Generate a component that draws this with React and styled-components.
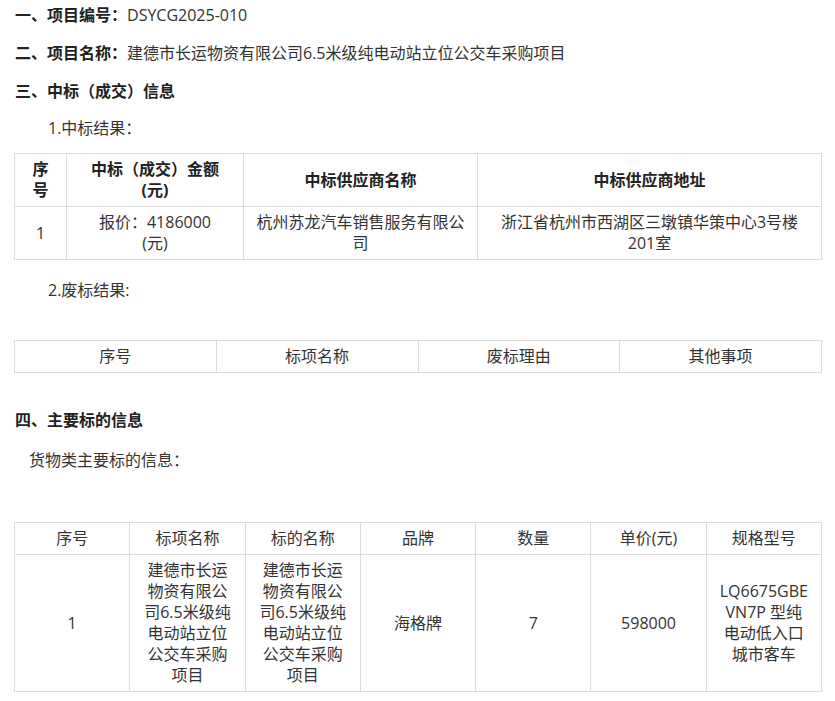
import React from 'react';
import styled, { createGlobalStyle } from 'styled-components';

const Global = createGlobalStyle`
body {
    margin: 0;
    background: #fff;
    color: #333;
    font-family: "Open Sans", "Noto Sans CJK SC", sans-serif;
    font-size: 16px;
}
`;

const Page = styled.div`
padding: 3px 13px 10px 14px;
`;

const Para = styled.p`
margin: ${p => p.$top || 0}px 0 0;
padding-left: ${p => p.$indent || 1}px;
line-height: 24px;
font-size: 16px;
b {
    font-weight: 700;
    color: #222;
}
`;

const Table = styled.table`
margin-top: ${p => p.$top || 0}px;
width: 100%;
border-collapse: collapse;
table-layout: fixed;
td, th {
    border: 1px solid #dcdcdc;
    padding: 5px 10px;
    text-align: center;
    vertical-align: middle;
    line-height: 21px;
    font-size: 16px;
    color: #333;
}
th {
    font-weight: ${p => (p.$boldHead ? 700 : 400)};
    color: ${p => (p.$boldHead ? '#222' : '#333')};
}
`;

const App = () => {
    return (
        <>
            <Global />
            <Page>
                <Para><b>一、项目编号：</b>DSYCG2025-010</Para>
                <Para $top={14}><b>二、项目名称：</b>建德市长运物资有限公司6.5米级纯电动站立位公交车采购项目</Para>
                <Para $top={14}><b>三、中标（成交）信息</b></Para>
                <Para $top={13} $indent={34}>1.中标结果：</Para>
                <Table $top={13} $boldHead>
                    <colgroup>
                        <col style={{ width: 52 }} />
                        <col style={{ width: 177 }} />
                        <col style={{ width: 234 }} />
                        <col />
                    </colgroup>
                    <thead>
                        <tr>
                            <th>序号</th>
                            <th>中标（成交）金额<br />(元)</th>
                            <th>中标供应商名称</th>
                            <th>中标供应商地址</th>
                        </tr>
                    </thead>
                    <tbody>
                        <tr>
                            <td>1</td>
                            <td>报价：4186000<br />(元)</td>
                            <td>杭州苏龙汽车销售服务有限公司</td>
                            <td>浙江省杭州市西湖区三墩镇华策中心3号楼201室</td>
                        </tr>
                    </tbody>
                </Table>
                <Para $top={18} $indent={34}>2.废标结果:</Para>
                <Table $top={38}>
                    <thead>
                        <tr>
                            <th>序号</th>
                            <th>标项名称</th>
                            <th>废标理由</th>
                            <th>其他事项</th>
                        </tr>
                    </thead>
                </Table>
                <Para $top={35}><b>四、主要标的信息</b></Para>
                <Para $top={16} $indent={15}>货物类主要标的信息：</Para>
                <Table $top={50}>
                    <thead>
                        <tr>
                            <th>序号</th>
                            <th>标项名称</th>
                            <th>标的名称</th>
                            <th>品牌</th>
                            <th>数量</th>
                            <th>单价(元)</th>
                            <th>规格型号</th>
                        </tr>
                    </thead>
                    <tbody>
                        <tr>
                            <td>1</td>
                            <td>建德市长运物资有限公司6.5米级纯电动站立位公交车采购项目</td>
                            <td>建德市长运物资有限公司6.5米级纯电动站立位公交车采购项目</td>
                            <td>海格牌</td>
                            <td>7</td>
                            <td>598000</td>
                            <td>LQ6675GBE<br />VN7P 型纯<br />电动低入口<br />城市客车</td>
                        </tr>
                    </tbody>
                </Table>
            </Page>
        </>
    );
};

export default App;
